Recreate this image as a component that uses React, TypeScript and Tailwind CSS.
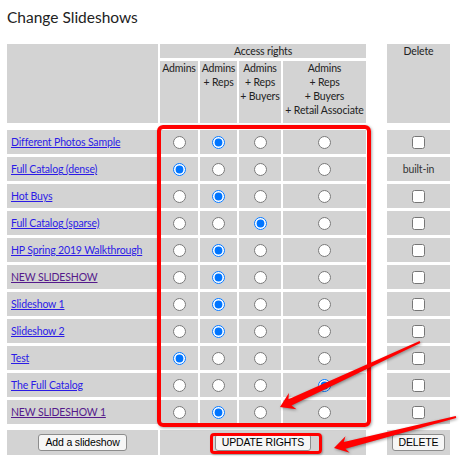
import React from "react";

type Row = { name: string; level: number; visited?: boolean; builtIn?: boolean };

const rows: Row[] = [
  { name: "Different Photos Sample", level: 1 },
  { name: "Full Catalog (dense)", level: 0, builtIn: true },
  { name: "Hot Buys", level: 1 },
  { name: "Full Catalog (sparse)", level: 2 },
  { name: "HP Spring 2019 Walkthrough", level: 1 },
  { name: "NEW SLIDESHOW", level: 1, visited: true },
  { name: "Slideshow 1", level: 1 },
  { name: "Slideshow 2", level: 1 },
  { name: "Test", level: 0 },
  { name: "The Full Catalog", level: 3 },
  { name: "NEW SLIDESHOW 1", level: 1, visited: true },
];

const levels = [
  ["Admins"],
  ["Admins", "+ Reps"],
  ["Admins", "+ Reps", "+ Buyers"],
  ["Admins", "+ Reps", "+ Buyers", "+ Retail Associate"],
];

type Pt = [number, number];

// arrow polygon from tail to tip, thin tail, barbed head
function arrowPoints(tail: Pt, tip: Pt, headLen: number, headHalf: number, tailW: number, headW: number) {
  const dx = tip[0] - tail[0];
  const dy = tip[1] - tail[1];
  const len = Math.hypot(dx, dy);
  const ux = dx / len;
  const uy = dy / len;
  const nx = -uy;
  const ny = ux;
  const bx = tip[0] - ux * headLen;
  const by = tip[1] - uy * headLen;
  const jx = bx + ux * 3;
  const jy = by + uy * 3;
  const pts: Pt[] = [
    [tail[0] + nx * tailW / 2, tail[1] + ny * tailW / 2],
    [jx + nx * headW / 2, jy + ny * headW / 2],
    [bx + nx * headHalf, by + ny * headHalf],
    tip,
    [bx - nx * headHalf, by - ny * headHalf],
    [jx - nx * headW / 2, jy - ny * headW / 2],
    [tail[0] - nx * tailW / 2, tail[1] - ny * tailW / 2],
  ];
  return pts.map((p) => `${p[0].toFixed(1)},${p[1].toFixed(1)}`).join(" ");
}

const cell = "bg-[#d3d3d3]";
const btn =
  "h-[17px] px-[6px] border border-[#8c8c8c] rounded-[3px] bg-[#f6f6f6] text-[10.5px] leading-none text-black font-['Liberation_Sans',Arial,sans-serif]";

export default function App() {
  return (
    <div className="relative w-[469px] h-[462px] bg-white px-[7px] pt-[6px] font-['Lato',sans-serif] text-[#222]">
      <h1 className="text-[15.5px] leading-[22px] mb-[16px]">Change Slideshows</h1>

      <div className="grid grid-cols-[151px_38px_37px_42px_83px_17px_63px] grid-rows-[14px_62px_1px_repeat(11,24px)_0px_25px] gap-x-[2px] gap-y-[3px] text-[10.5px] leading-[14px] tracking-[-0.15px]">
        {/* header */}
        <div className={`${cell} row-span-2`} />
        <div className={`${cell} col-span-4 text-center`}>Access rights</div>
        <div />
        <div className={`${cell} row-span-2 text-center`}>Delete</div>
        {levels.map((lines, i) => (
          <div key={i} className={`${cell} text-center whitespace-nowrap`}>
            {lines.map((l) => (
              <div key={l}>{l}</div>
            ))}
          </div>
        ))}
        <div />
        <div className="col-span-7" />

        {rows.map((r, ri) => (
          <React.Fragment key={r.name}>
            <div className={`${cell} flex items-center px-[4px]`}>
              <a
                href="#"
                className={`underline whitespace-nowrap ${r.visited ? "text-[#551a8b]" : "text-[#2b1be6]"}`}
              >
                {r.name}
              </a>
            </div>
            {levels.map((_, li) => (
              <div key={li} className={`${cell} flex items-center justify-center`}>
                <input
                  type="radio"
                  name={`rights-${ri}`}
                  defaultChecked={r.level === li}
                  className="m-0 w-[13px] h-[13px]"
                />
              </div>
            ))}
            <div />
            <div className={`${cell} flex items-center justify-center`}>
              {r.builtIn ? (
                <span className="text-[#333]">built-in</span>
              ) : (
                <input type="checkbox" className="m-0 w-[13px] h-[13px]" />
              )}
            </div>
          </React.Fragment>
        ))}

        <div className="col-span-7" />
        <div className={`${cell} flex items-center justify-center`}>
          <button className={btn}>Add a slideshow</button>
        </div>
        <div className={`${cell} col-span-4 flex items-center justify-center`}>
          <button className={btn}>UPDATE RIGHTS</button>
        </div>
        <div />
        <div className={`${cell} flex items-center justify-center`}>
          <button className={btn}>DELETE</button>
        </div>
      </div>

      {/* annotations */}
      <div className="absolute left-[157px] top-[125px] w-[214px] h-[302px] border-4 border-[#ff0000] rounded-[6px] shadow-[1px_1px_3px_rgba(0,0,0,0.35)] pointer-events-none" />
      <div className="absolute left-[210px] top-[433px] w-[112px] h-[21px] border-[3.5px] border-[#ff0000] rounded-[4px] shadow-[1px_1px_2px_rgba(0,0,0,0.3)] pointer-events-none" />
      <svg
        className="absolute inset-0 pointer-events-none [filter:drop-shadow(1px_1px_1.5px_rgba(0,0,0,0.4))]"
        width={469}
        height={462}
        viewBox="0 0 469 462"
      >
        <polygon points={arrowPoints([420, 342], [280, 407], 14, 9, 2, 7)} fill="#ff0000" />
        <polygon points={arrowPoints([456, 417], [334, 448], 14, 8.5, 2, 7)} fill="#ff0000" />
      </svg>
    </div>
  );
}
